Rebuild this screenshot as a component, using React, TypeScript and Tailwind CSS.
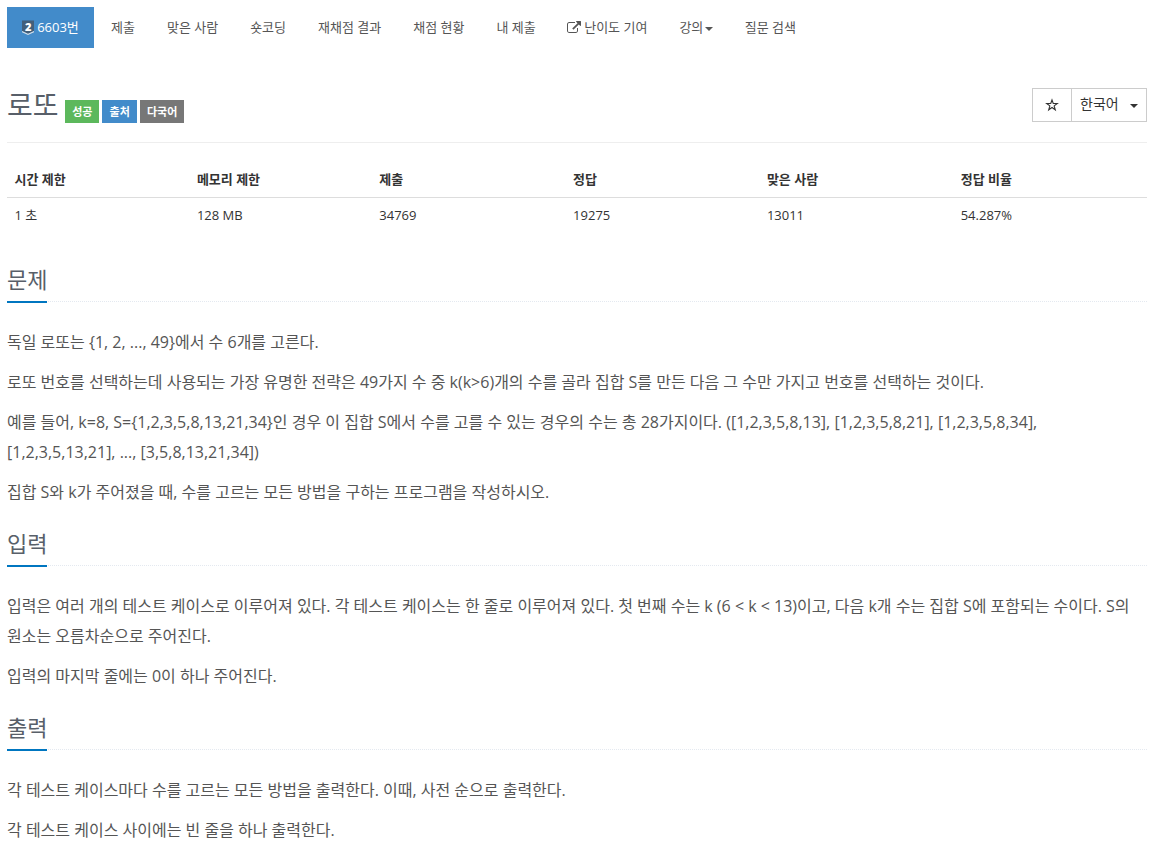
import React from "react";

const navItems = [
  { name: "제출" },
  { name: "맞은 사람" },
  { name: "숏코딩" },
  { name: "재채점 결과" },
  { name: "채점 현황" },
  { name: "내 제출" },
  { name: "난이도 기여", external: true },
  { name: "강의", dropdown: true },
  { name: "질문 검색" },
];

const labels = [
  { name: "성공", color: "bg-[#5cb85c]" },
  { name: "출처", color: "bg-[#428bca]" },
  { name: "다국어", color: "bg-[#777777]" },
];

const info = [
  { name: "시간 제한", value: "1 초", width: "w-[16%]" },
  { name: "메모리 제한", value: "128 MB", width: "w-[16%]" },
  { name: "제출", value: "34769", width: "w-[17%]" },
  { name: "정답", value: "19275", width: "w-[17%]" },
  { name: "맞은 사람", value: "13011", width: "w-[17%]" },
  { name: "정답 비율", value: "54.287%", width: "w-[17%]" },
];

const sections = [
  {
    title: "문제",
    paragraphs: [
      "독일 로또는 {1, 2, ..., 49}에서 수 6개를 고른다.",
      "로또 번호를 선택하는데 사용되는 가장 유명한 전략은 49가지 수 중 k(k>6)개의 수를 골라 집합 S를 만든 다음 그 수만 가지고 번호를 선택하는 것이다.",
      "예를 들어, k=8, S={1,2,3,5,8,13,21,34}인 경우 이 집합 S에서 수를 고를 수 있는 경우의 수는 총 28가지이다. ([1,2,3,5,8,13], [1,2,3,5,8,21], [1,2,3,5,8,34], [1,2,3,5,13,21], ..., [3,5,8,13,21,34])",
      "집합 S와 k가 주어졌을 때, 수를 고르는 모든 방법을 구하는 프로그램을 작성하시오.",
    ],
  },
  {
    title: "입력",
    paragraphs: [
      "입력은 여러 개의 테스트 케이스로 이루어져 있다. 각 테스트 케이스는 한 줄로 이루어져 있다. 첫 번째 수는 k (6 < k < 13)이고, 다음 k개 수는 집합 S에 포함되는 수이다. S의 원소는 오름차순으로 주어진다.",
      "입력의 마지막 줄에는 0이 하나 주어진다.",
    ],
  },
  {
    title: "출력",
    paragraphs: [
      "각 테스트 케이스마다 수를 고르는 모든 방법을 출력한다. 이때, 사전 순으로 출력한다.",
      "각 테스트 케이스 사이에는 빈 줄을 하나 출력한다.",
    ],
  },
];

function TierBadge() {
  return (
    <span className="relative mr-[3px] h-[15px] w-3 shrink-0 text-center text-[11px] leading-[13px] font-extrabold">
      <svg viewBox="0 0 12 15" className="absolute inset-0 h-[15px] w-3">
        <path d="M0 0.500h12v10.500L6 14 0 11z" fill="#435f7a" />
        <path d="M0 11l6 2.700 6-2.700v1.200L6 15l-6-2.800z" fill="#d5e0e9" />
      </svg>
      <span className="relative block">2</span>
    </span>
  );
}

function ExternalIcon() {
  return (
    <svg viewBox="0 0 1792 1792" className="mr-[3.5px] -ml-px h-[14px] w-[14px] shrink-0" fill="currentColor">
      <path d="M1408 928v320q0 119-84.500 203.500t-203.500 84.500h-832q-119 0-203.500-84.500t-84.500-203.500v-832q0-119 84.500-203.500t203.500-84.500h704q14 0 23 9t9 23v64q0 14-9 23t-23 9h-704q-66 0-113 47t-47 113v832q0 66 47 113t113 47h832q66 0 113-47t47-113v-320q0-14 9-23t23-9h64q14 0 23 9t9 23zm384-864v512q0 26-19 45t-45 19-45-19l-176-176-652 652q-10 10-23 10t-23-10l-114-114q-10-10-10-23t10-23l652-652-176-176q-19-19-19-45t19-45 45-19h512q26 0 45 19t19 45z" />
    </svg>
  );
}

function StarIcon() {
  return (
    <svg viewBox="0 0 14 14" className="mr-px mb-px h-[14px] w-[14px]" fill="none" stroke="currentColor" strokeWidth="1.1">
      <path d="M7 2l1.250 3.500H12.300L9.150 7.900l1.150 3.900L7 9.500l-3.300 2.300 1.150-3.900L1.700 5.500h4.050z" />
    </svg>
  );
}

function Caret() {
  return <span className="mt-0.5 border-x-4 border-t-4 border-x-transparent border-t-current" />;
}

export default function App() {
  return (
    <div
      lang="ko"
      className="h-[848px] overflow-hidden bg-white pt-[7px] pr-4 pl-[7px] font-['Open_Sans','Noto_Sans_CJK_KR',sans-serif] text-[13px] leading-[1.6] text-[#333]"
    >
      <nav className="flex gap-0.5 text-[#555]">
        <a className="flex h-[41px] w-[87px] items-center justify-center bg-[#428bca] text-white">
          <TierBadge />
          6603번
        </a>
        {navItems.map((item) => (
          <a key={item.name} className="flex h-[41px] items-center px-[15px] whitespace-nowrap">
            {item.external && <ExternalIcon />}
            {item.name}
            {item.dropdown && (
              <span className="ml-[1.5px] flex">
                <Caret />
              </span>
            )}
          </a>
        ))}
      </nav>

      {/* Title */}
      <header className="flex h-[95px] items-start justify-between border-b border-[#eee]">
        <div className="flex pt-[37px]">
          <h1 className="mt-px text-[28px] leading-[38px] text-[#585f69]">로또</h1>
          <div className="mt-[15px] ml-[6.5px] flex gap-[3px]">
            {labels.map((label) => (
              <span
                key={label.name}
                className={`h-[23px] px-[7.1px] text-[11px] leading-[23px] font-bold text-white ${label.color}`}
              >
                {label.name}
              </span>
            ))}
          </div>
        </div>
        <div className="mt-10 flex h-[34px] w-[115px] border border-[#ccc] text-[14px]">
          <button className="flex w-[39px] items-center justify-center border-r border-[#ccc]">
            <StarIcon />
          </button>
          <button className="flex flex-1 items-center justify-between pr-2 pb-px pl-2">
            한국어
            <Caret />
          </button>
        </div>
      </header>

      <table className="mt-[19px] w-full table-fixed text-left">
        <thead>
          <tr className="h-[35px] border-b border-[#ddd]">
            {info.map((col) => (
              <th key={col.name} className={`px-[7.5px] pt-px font-bold ${col.width}`}>
                {col.name}
              </th>
            ))}
          </tr>
        </thead>
        <tbody>
          <tr className="h-[36px]">
            {info.map((col) => (
              <td key={col.name} className="px-[7.5px]">
                {col.value}
              </td>
            ))}
          </tr>
        </tbody>
      </table>

      <main className="pt-[30px]">
        {sections.map((section) => (
          <section key={section.title} className="mb-5">
            <div className="mb-[25px] flex h-[39px] border-b border-dotted border-[#e4e9f0]">
              <h2 className="-mb-0.5 border-b-2 border-[#0076c0] text-[22px] leading-[33px] text-[#585f69]">
                {section.title}
              </h2>
            </div>
            {section.paragraphs.map((text) => (
              <p key={text} className="mb-2.5 text-[16px] leading-[30px] text-[#555]">
                {text}
              </p>
            ))}
          </section>
        ))}
      </main>
    </div>
  );
}
